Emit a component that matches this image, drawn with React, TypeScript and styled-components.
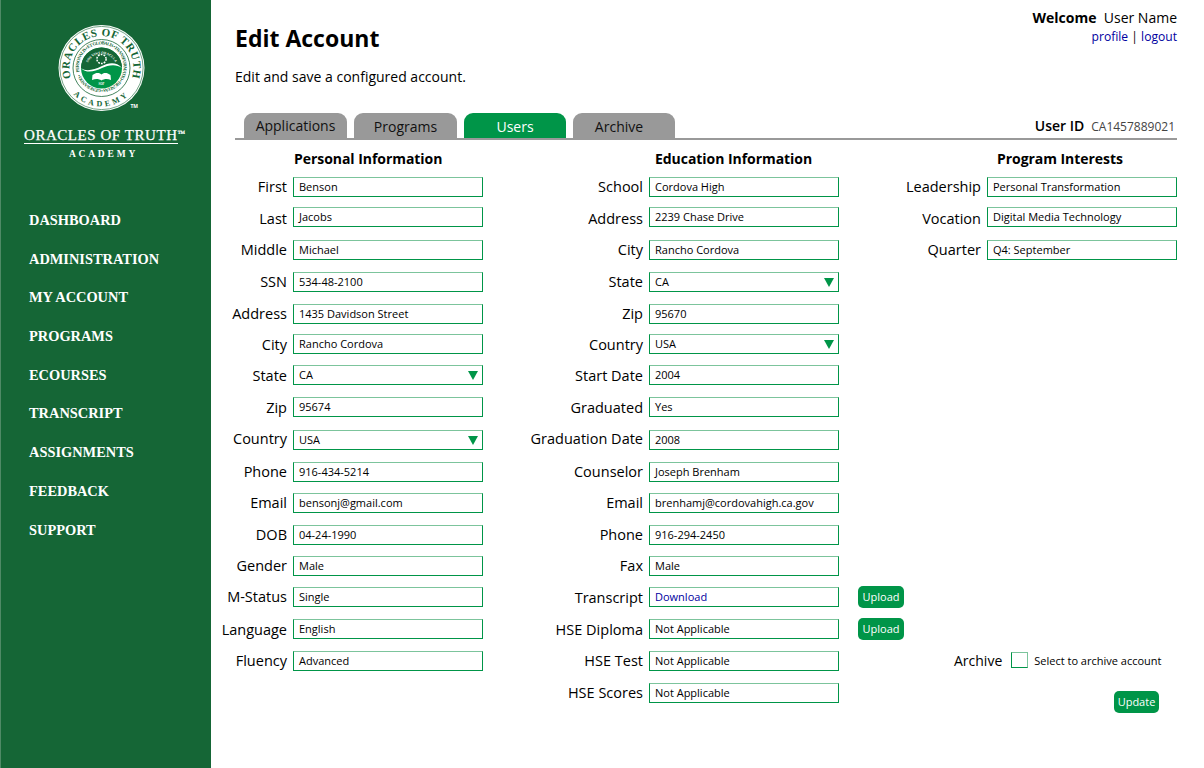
import React from "react";
import styled, { createGlobalStyle } from "styled-components";

const GREEN = "#009548";
const DARK = "#156636";

type Field = {
  label: string;
  value: string;
  gap: number;
  nudge?: number;
  select?: boolean;
  link?: boolean;
  upload?: boolean;
};

const personal: Field[] = [
  { label: "First", value: "Benson", gap: 0 },
  { label: "Last", value: "Jacobs", gap: 10, nudge: 2 },
  { label: "Middle", value: "Michael", gap: 13 },
  { label: "SSN", value: "534-48-2100", gap: 12 },
  { label: "Address", value: "1435 Davidson Street", gap: 12 },
  { label: "City", value: "Rancho Cordova", gap: 10, nudge: 1 },
  { label: "State", value: "CA", gap: 11, select: true, nudge: 1 },
  { label: "Zip", value: "95674", gap: 12, nudge: 1 },
  { label: "Country", value: "USA", gap: 13, select: true, nudge: -1 },
  { label: "Phone", value: "916-434-5214", gap: 12 },
  { label: "Email", value: "bensonj@gmail.com", gap: 11 },
  { label: "DOB", value: "04-24-1990", gap: 12 },
  { label: "Gender", value: "Male", gap: 11 },
  { label: "M-Status", value: "Single", gap: 11 },
  { label: "Language", value: "English", gap: 12, nudge: 1 },
  { label: "Fluency", value: "Advanced", gap: 12 },
];

const education: Field[] = [
  { label: "School", value: "Cordova High", gap: 0 },
  { label: "Address", value: "2239 Chase Drive", gap: 10, nudge: 2 },
  { label: "City", value: "Rancho Cordova", gap: 13 },
  { label: "State", value: "CA", gap: 12, select: true },
  { label: "Zip", value: "95670", gap: 12 },
  { label: "Country", value: "USA", gap: 10, select: true, nudge: 1 },
  { label: "Start Date", value: "2004", gap: 11, nudge: 1 },
  { label: "Graduated", value: "Yes", gap: 12, nudge: 1 },
  { label: "Graduation Date", value: "2008", gap: 13, nudge: -1 },
  { label: "Counselor", value: "Joseph Brenham", gap: 12 },
  { label: "Email", value: "brenhamj@cordovahigh.ca.gov", gap: 11 },
  { label: "Phone", value: "916-294-2450", gap: 12 },
  { label: "Fax", value: "Male", gap: 11 },
  { label: "Transcript", value: "Download", gap: 11, link: true, upload: true, nudge: 1 },
  { label: "HSE Diploma", value: "Not Applicable", gap: 12, upload: true, nudge: 1 },
  { label: "HSE Test", value: "Not Applicable", gap: 12 },
  { label: "HSE Scores", value: "Not Applicable", gap: 12 },
];

const interests: Field[] = [
  { label: "Leadership", value: "Personal Transformation", gap: 0 },
  { label: "Vocation", value: "Digital Media Technology", gap: 10, nudge: 2 },
  { label: "Quarter", value: "Q4: September", gap: 13 },
];

const navItems = [
  "DASHBOARD",
  "ADMINISTRATION",
  "MY ACCOUNT",
  "PROGRAMS",
  "ECOURSES",
  "TRANSCRIPT",
  "ASSIGNMENTS",
  "FEEDBACK",
  "SUPPORT",
];

const tabs = [
  { name: "Applications", width: 103, active: false, raised: true, trim: 0 },
  { name: "Programs", width: 103, active: false, raised: false, trim: 0 },
  { name: "Users", width: 102, active: true, raised: false, trim: 0 },
  { name: "Archive", width: 102, active: false, raised: false, trim: 10 },
];

function Logo() {
  return (
    <svg width="88" height="90" viewBox="0 0 88 90">
      <defs>
        <path id="arcTop" d="M 15.2 58 A 32 32 0 1 1 71.8 58" />
        <path id="arcBottom" d="M 9 60 A 38.5 38.5 0 0 0 78 60" />
        <path id="arcInner" d="M 21.5 47 A 22.4 22.4 0 1 1 21.6 47.4" />
        <path id="arcMotto" d="M 29 40 A 15 15 0 0 1 58 40" />
      </defs>
      <circle cx="43.5" cy="43" r="43" fill="#fff" />
      <circle cx="43.5" cy="43" r="41.6" fill="none" stroke={DARK} strokeWidth="0.6" />
      <text fontFamily="'Liberation Serif', serif" fontWeight="700" fontSize="11" letterSpacing="0.5" fill={DARK}>
        <textPath href="#arcTop" startOffset="50%" textAnchor="middle">
          ORACLES OF TRUTH
        </textPath>
      </text>
      <text fontFamily="'Liberation Serif', serif" fontWeight="700" fontSize="8" letterSpacing="3" fill={DARK}>
        <textPath href="#arcBottom" startOffset="50%" textAnchor="middle">
          ACADEMY
        </textPath>
      </text>
      <circle cx="43.5" cy="43" r="28.5" fill="none" stroke={DARK} strokeWidth="0.8" />
      <text fontFamily="'Liberation Serif', serif" fontWeight="700" fontSize="4.6" fill={DARK}>
        <textPath href="#arcInner" textLength="138">
          PERSONALIS • ET GLOBALIS • TRANSFORMATIO • DIGNITAS • GENERANDO •
        </textPath>
      </text>
      <circle cx="43.5" cy="43" r="20.5" fill={GREEN} />
      <path d="M 23 43 A 20.5 20.5 0 0 1 64 43 C 58 36 50 38 44 41 C 36 45 28 47 23 43 Z" fill={DARK} />
      <path
        d="M 23 43 C 28 47 36 45 44 41 C 50 38 58 36 64 43 C 58 38.5 50 40 44 43 C 36 47 28 48.5 23 43 Z"
        fill="#fff"
      />
      <text fontFamily="'Liberation Serif', serif" fontWeight="700" fontSize="3.4" fill="#fff">
        <textPath href="#arcMotto" startOffset="50%" textAnchor="middle">
          SOS VINT ORACULA
        </textPath>
      </text>
      <circle cx="43.5" cy="34" r="4.6" fill="none" stroke="#fff" strokeWidth="1.5" strokeDasharray="1.8 1.1" />
      <path
        d="M 34 55 L 34.5 50 C 38 47 42 47.5 43.5 49.5 C 45 47.5 49 47 52.5 50 L 53 55 C 49 53.5 46 54 43.5 55.5 C 41 54 38 53.5 34 55 Z"
        fill="#fff"
      />
      <text x="43.5" y="60" textAnchor="middle" fontFamily="'Liberation Serif', serif" fontWeight="700" fontSize="3" fill="#fff">
        SOP
      </text>
    </svg>
  );
}

function FieldRow({ field }: { field: Field }) {
  return (
    <Row $gap={field.gap}>
      <Label $nudge={field.nudge ?? 0}>{field.label}</Label>
      <InputBox>
        {field.link ? <FileLink href="#">{field.value}</FileLink> : field.value}
        {field.select && <Caret />}
      </InputBox>
      {field.upload && <UploadButton>Upload</UploadButton>}
    </Row>
  );
}

export default function App() {
  return (
    <Page>
      <GlobalStyle />
      <Sidebar>
        <LogoWrap>
          <Logo />
          <Tm>TM</Tm>
        </LogoWrap>
        <BrandName>
          ORACLES OF TRUTH<BrandTm>™</BrandTm>
        </BrandName>
        <BrandSub>ACADEMY</BrandSub>
        <Nav>
          {navItems.map((item) => (
            <NavItem key={item}>{item}</NavItem>
          ))}
        </Nav>
      </Sidebar>
      <Main>
        <UserBox>
          <div>
            <b>Welcome</b>&nbsp; User Name
          </div>
          <UserLinks>
            <a href="#">profile</a> | <a href="#">logout</a>
          </UserLinks>
        </UserBox>
        <Title>Edit Account</Title>
        <Subtitle>Edit and save a configured account.</Subtitle>
        <TabBar>
          {tabs.map((t) => (
            <Tab key={t.name} $width={t.width} $active={t.active} $raised={t.raised} $trim={t.trim}>
              {t.name}
            </Tab>
          ))}
          <UserId>
            <b>User ID</b>
            <span>CA1457889021</span>
          </UserId>
        </TabBar>
        <Columns>
          <Column $labelWidth={76} $width={272}>
            <Heading $left={83}>Personal Information</Heading>
            {personal.map((f) => (
              <FieldRow key={f.label} field={f} />
            ))}
          </Column>
          <Column $labelWidth={160} $width={356}>
            <Heading $left={172}>Education Information</Heading>
            {education.map((f) => (
              <FieldRow key={f.label} field={f} />
            ))}
          </Column>
          <Column $labelWidth={142} $width={338}>
            <Heading $left={158}>Program Interests</Heading>
            {interests.map((f) => (
              <FieldRow key={f.label} field={f} />
            ))}
            <ArchiveRow>
              <ArchiveLabel>Archive</ArchiveLabel>
              <CheckBox />
              <ArchiveHint>Select to archive account</ArchiveHint>
            </ArchiveRow>
            <UpdateRow>
              <UpdateButton>Update</UpdateButton>
            </UpdateRow>
          </Column>
        </Columns>
      </Main>
    </Page>
  );
}

const GlobalStyle = createGlobalStyle`
  html, body {
    margin: 0;
    padding: 0;
    background: #fff;
    font-family: "Open Sans", sans-serif;
    color: #000;
  }
  a {
    color: #0000a0;
    text-decoration: none;
  }
`;

const Page = styled.div`
  display: flex;
  width: 1204px;
  height: 768px;
  overflow: hidden;
`;

const Sidebar = styled.aside`
  width: 211px;
  flex-shrink: 0;
  background: ${DARK};
  border-left: 1px solid #4f8a66;
  box-sizing: border-box;
  display: flex;
  flex-direction: column;
  align-items: flex-start;
  padding-top: 25px;
  color: #fff;
`;

const LogoWrap = styled.div`
  position: relative;
  height: 90px;
  margin-left: 57px;
`;

const Tm = styled.span`
  position: absolute;
  right: 8px;
  bottom: 6px;
  font-size: 5px;
  font-weight: 700;
`;

const BrandName = styled.div`
  margin: 12px 0 0 23px;
  width: 154px;
  border-bottom: 1px solid #fff;
  font-family: "Liberation Serif", serif;
  font-size: 15px;
  letter-spacing: 0.55px;
  line-height: 16px;
  white-space: nowrap;
  -webkit-text-stroke: 0.25px #fff;
`;

const BrandTm = styled.span`
  font-size: 8px;
  line-height: 0;
  vertical-align: 4px;
  letter-spacing: 0;
`;

const BrandSub = styled.div`
  align-self: center;
  margin: 5px 5px 0 0;
  font-family: "Liberation Serif", serif;
  font-size: 9.5px;
  font-weight: 700;
  letter-spacing: 2.8px;
  line-height: 11px;
`;

const Nav = styled.nav`
  align-self: stretch;
  margin-top: 50px;
  padding-left: 28px;
  display: flex;
  flex-direction: column;
  gap: 18.7px;
`;

const NavItem = styled.div`
  font-family: "Liberation Serif", serif;
  font-size: 14.4px;
  font-weight: 700;
  line-height: 20px;
  white-space: nowrap;
`;

const Main = styled.main`
  position: relative;
  flex: 1;
  min-width: 0;
  padding: 0 27px 0 24px;
`;

const UserBox = styled.div`
  position: absolute;
  top: 8px;
  right: 27px;
  text-align: right;
  font-size: 14px;
  line-height: 19px;
`;

const UserLinks = styled.div`
  font-size: 12.1px;
  line-height: 20px;
`;

const Title = styled.h1`
  margin: 0;
  padding-top: 22px;
  font-size: 23px;
  font-weight: 700;
  line-height: 32px;
`;

const Subtitle = styled.p`
  margin: 13px 0 0;
  font-size: 14px;
  line-height: 19px;
`;

const TabBar = styled.div`
  display: flex;
  align-items: flex-end;
  gap: 7px;
  height: 25px;
  margin-top: 27px;
  padding-left: 9px;
  border-bottom: 2px solid #999;
`;

const Tab = styled.div<{ $width: number; $active: boolean; $raised: boolean; $trim: number }>`
  width: ${(p) => p.$width}px;
  height: 25px;
  box-sizing: border-box;
  padding-right: ${(p) => p.$trim}px;
  border-radius: 9px 9px 0 0;
  background: ${(p) => (p.$active ? GREEN : "#999")};
  color: ${(p) => (p.$active ? "#fff" : "#111")};
  font-size: 14px;
  line-height: ${(p) => (p.$raised ? "25px" : "28px")};
  text-align: center;
`;

const UserId = styled.div`
  margin-left: auto;
  display: flex;
  align-items: baseline;
  gap: 7px;
  padding-right: 2px;
  font-size: 14px;
  line-height: 22px;

  b {
    font-weight: 600;
  }

  span {
    font-size: 12px;
    color: #444;
  }
`;

const Columns = styled.div`
  display: flex;
  margin-left: -24px;
`;

const Column = styled.section<{ $labelWidth: number; $width: number }>`
  --label-width: ${(p) => p.$labelWidth}px;
  width: ${(p) => p.$width}px;
  flex-shrink: 0;
`;

const Heading = styled.h2<{ $left: number }>`
  margin: 0;
  padding: 9px 0 9px ${(p) => p.$left}px;
  font-size: 14px;
  font-weight: 700;
  letter-spacing: -0.05px;
  line-height: 19px;
  white-space: nowrap;
`;

const Row = styled.div<{ $gap: number }>`
  display: flex;
  align-items: center;
  height: 20px;
  margin-top: ${(p) => p.$gap}px;
`;

const Label = styled.label<{ $nudge: number }>`
  width: var(--label-width);
  flex-shrink: 0;
  margin-right: 6px;
  margin-top: ${(p) => Math.max(p.$nudge, 0) * 2}px;
  margin-bottom: ${(p) => Math.max(-p.$nudge, 0) * 2}px;
  text-align: right;
  font-size: 14.5px;
  line-height: 20px;
  white-space: nowrap;
`;

const InputBox = styled.div`
  position: relative;
  width: 190px;
  height: 20px;
  flex-shrink: 0;
  box-sizing: border-box;
  border: 1px solid ${GREEN};
  border-top-color: #7cc49c;
  padding-left: 5px;
  font-size: 11px;
  line-height: 18px;
  white-space: nowrap;
`;

const FileLink = styled.a`
  color: #0000a0;
`;

const Caret = styled.span`
  position: absolute;
  right: 4px;
  top: 5px;
  width: 0;
  height: 0;
  border-left: 5px solid transparent;
  border-right: 5px solid transparent;
  border-top: 9px solid ${GREEN};
`;

const UploadButton = styled.button`
  flex-shrink: 0;
  margin-left: 19px;
  width: 46px;
  height: 22px;
  padding: 0;
  border: 0;
  border-radius: 5px;
  background: ${GREEN};
  color: #fff;
  font-family: inherit;
  font-size: 11px;
  line-height: 20px;
`;

const ArchiveRow = styled.div`
  display: flex;
  align-items: center;
  margin-top: 390px;
  padding-left: 115px;
  height: 20px;
`;

const ArchiveLabel = styled.span`
  font-size: 14px;
  margin-right: 9px;
`;

const CheckBox = styled.span`
  width: 17px;
  height: 16px;
  box-sizing: border-box;
  border: 1px solid ${GREEN};
  border-top-color: #7cc49c;
  border-right-color: #7cc49c;
  margin-right: 6px;
`;

const ArchiveHint = styled.span`
  font-size: 11px;
  line-height: 16px;
  padding-top: 2px;
`;

const UpdateRow = styled.div`
  display: flex;
  justify-content: flex-end;
  margin-top: 21px;
  padding-right: 18px;
`;

const UpdateButton = styled(UploadButton)`
  margin-left: 0;
  width: 45px;
`;
